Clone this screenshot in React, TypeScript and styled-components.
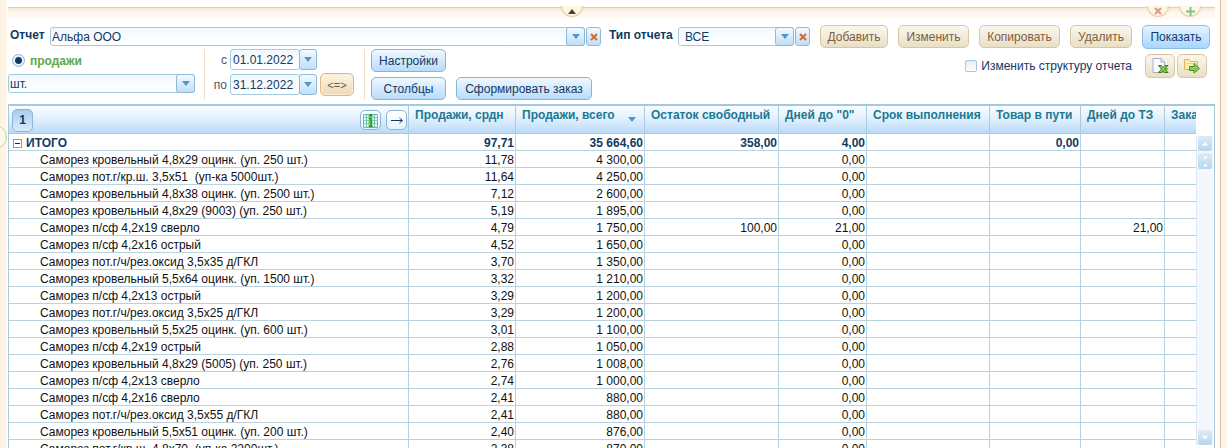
import React from "react";
import styled, { createGlobalStyle, css } from "styled-components";

const Global = createGlobalStyle`
  *, *::before, *::after { box-sizing: border-box; }
  html, body { margin: 0; height: 100%; }
  body { overflow: hidden; background: #fff; font: 12px/16px "Liberation Sans", Arial, sans-serif; color: #123a63; }
  button, input, select { font: inherit; color: inherit; margin: 0; }
  #root { height: 100%; }
`;

const Page = styled.div`
  display: grid;
  grid-template-columns: 7px minmax(0, 1fr) 7px;
  height: 100vh;
`;
const LeftRail = styled.div`
  position: relative;
  background: linear-gradient(90deg, #fdf3e3, #fff6ea);
`;
const RightRail = styled.div`
  background: #fdf3e8;
  border-left: 1px solid #dcbda0;
`;
const RailHandle = styled.button`
  position: absolute;
  top: 125px;
  right: 0;
  width: 24px;
  height: 24px;
  padding: 0;
  border: 1px solid #c5d6a0;
  border-radius: 50%;
  background: #fdf8e8;
`;
const Main = styled.main`
  display: flex;
  flex-direction: column;
  min-width: 0;
  height: 100vh;
  padding: 7px 5px 0 1px;
`;
const TopEdge = styled.div`
  position: relative;
  flex: none;
  height: 12px;
  border-top: 1px solid #edcba8;
  background: linear-gradient(#f9ead6 0 2px, #fdf5ec 3px, #fffaf6);
`;
const Tab = styled.button<{ $right?: string }>`
  position: absolute;
  top: -2px;
  ${(p) => (p.$right ? css`right: ${p.$right};` : css`left: calc(50% - 51px);`)}
  display: flex;
  align-items: center;
  justify-content: center;
  width: 22px;
  height: 11px;
  padding: 0;
  border: 1px solid #e6cfa6;
  border-top: 0;
  border-radius: 0 0 11px 11px;
  background: #fdf6e4;
`;

const Filters = styled.form`
  flex: none;
  display: flex;
  flex-direction: column;
  padding-top: 6px;
`;
const FilterLine = styled.div`
  display: flex;
  align-items: flex-start;
`;
const FieldLabel = styled.label<{ $w: number; $indent?: boolean }>`
  flex: none;
  width: ${(p) => p.$w}px;
  padding: 2px 0 0 ${(p) => (p.$indent ? 8 : 2)}px;
  font-weight: bold;
  white-space: nowrap;
`;
const Combo = styled.div<{ $w?: number }>`
  display: grid;
  grid-template-columns: minmax(0, 1fr) 19px;
  flex: ${(p) => (p.$w ? "none" : "1")};
  width: ${(p) => (p.$w ? p.$w + "px" : "auto")};
  height: 19px;
  margin-top: 2px;
`;
const Select = styled.select<{ $indent?: boolean }>`
  grid-area: 1 / 1 / 2 / 3;
  appearance: none;
  width: 100%;
  height: 19px;
  padding: 0 20px 0 ${(p) => (p.$indent ? 6 : 1)}px;
  border: 1px solid #a6cbe0;
  border-radius: 3px;
  background: linear-gradient(#f1f9fe, #fff);
`;
const arrowBox = css`
  display: flex;
  align-items: center;
  justify-content: center;
  padding: 0;
  border: 1px solid #8db9dc;
  border-radius: 3px;
  background: linear-gradient(#f4faff, #c0def8);
`;
const ComboArrow = styled.span`
  ${arrowBox}
  grid-area: 1 / 2;
  pointer-events: none;
`;
const DateArrow = styled.button`
  ${arrowBox}
  width: 18px;
  height: 21px;
  margin-left: -1px;
`;
const ClearButton = styled.button`
  ${arrowBox}
  flex: none;
  width: 15px;
  height: 19px;
  margin: 2px 0 0 1px;
`;
const tones = {
  blue: css`border-color: #8bb4d2; background: linear-gradient(#f0f8ff, #b8dcfa); color: #123a63;`,
  bright: css`border-color: #8cbde2; background: linear-gradient(#e4f4ff, #a9d6fd); color: #123a75;`,
  sand: css`border-color: #d8c6a2; background: linear-gradient(#fbf7ee, #e9dfc4); color: #7c6040;`,
};
const Button = styled.button<{ $w: number; $h?: number; $tone: keyof typeof tones }>`
  flex: none;
  display: inline-flex;
  align-items: center;
  justify-content: center;
  width: ${(p) => p.$w}px;
  height: ${(p) => p.$h ?? 23}px;
  padding: 0;
  border: 1px solid;
  border-radius: 5px;
  white-space: nowrap;
  ${(p) => tones[p.$tone]}
`;
const Actions = styled.div`
  flex: none;
  display: flex;
  gap: 10px;
  margin-left: 10px;
  padding-right: 5px;
`;
const Group = styled.div<{ $w?: number; $line?: boolean }>`
  flex: none;
  width: ${(p) => (p.$w ? p.$w + "px" : "auto")};
  height: 51px;
  border-right: ${(p) => (p.$line ? "1px solid #efdcc2" : "0")};
`;
const RadioLabel = styled.label`
  display: flex;
  align-items: center;
  gap: 5px;
  height: 23px;
  padding-left: 4px;
  color: #62a744;
  font-weight: bold;
`;
const Radio = styled.input`
  appearance: none;
  width: 13px;
  height: 13px;
  border: 1px solid #8fb4d4;
  border-radius: 50%;
  background: radial-gradient(circle, #143a60 0 3px, #e9f3fb 4px);
`;
const DateLine = styled.div`
  display: flex;
  align-items: center;
  height: 21px;
  margin-bottom: 4px;
`;
const DateLabel = styled.label`
  width: 25px;
  padding-right: 3px;
  text-align: right;
  color: #4c5563;
`;
const DateInput = styled.input`
  width: 70px;
  height: 21px;
  padding: 0 2px;
  border: 1px solid #a6cbe0;
  border-radius: 3px;
  background: linear-gradient(#f1f9fe, #fff);
`;
const SwapButton = styled.button`
  width: 34px;
  height: 23px;
  margin-left: 3px;
  padding: 0;
  border: 1px solid #dcb985;
  border-radius: 5px;
  background: linear-gradient(#fcf4e6, #ecd9b8);
  box-shadow: inset 0 0 0 1px #faebd2;
  color: #6b5a45;
  font-size: 11px;
`;
const ButtonGrid = styled.div`
  display: grid;
  grid-template-columns: 75px 136px;
  grid-auto-rows: 23px;
  gap: 5px 10px;
  margin-left: 6px;
  & > :first-child { grid-column: 1 / 3; }
`;
const Structure = styled.div`
  display: flex;
  align-items: flex-start;
  margin-left: auto;
  padding: 5px 8px 0 0;
`;
const CheckLabel = styled.label`
  display: flex;
  align-items: center;
  gap: 4px;
  height: 23px;
  margin-right: 13px;
`;
const Check = styled.input`
  appearance: none;
  width: 12px;
  height: 12px;
  border: 1px solid #a9c6dd;
  border-radius: 2px;
  background: linear-gradient(#e3eef7, #fff);
`;
const IconPair = styled.div`
  display: flex;
  gap: 2px;
`;

const Grid = styled.section`
  flex: 1;
  display: flex;
  min-height: 0;
  margin-top: 4px;
  border: solid #a5c8dc;
  border-width: 2px 1px 0 1px;
`;
const Viewport = styled.div`
  flex: 1;
  min-width: 0;
  overflow: hidden;
`;
const Table = styled.table`
  width: calc(100% + 60px);
  table-layout: fixed;
  border-collapse: separate;
  border-spacing: 0;
`;
const HeadCell = styled.th`
  height: 28px;
  padding: 1px 6px 0;
  border-right: 1px solid #a9cbe0;
  border-bottom: 1px solid #a9cbe0;
  background: linear-gradient(#fafdff, #e2f1fe 45%, #b9dbf8);
  color: #1c7893;
  text-align: left;
  vertical-align: top;
  white-space: nowrap;
`;
const Tools = styled.div`
  display: flex;
  align-items: center;
  gap: 5px;
  height: 26px;
  margin: 0 -5px 0 -3px;
`;
const ToolButton = styled.button<{ $level?: boolean }>`
  display: flex;
  align-items: center;
  justify-content: center;
  width: 21px;
  height: ${(p) => (p.$level ? 23 : 20)}px;
  margin-right: ${(p) => (p.$level ? "auto" : "0")};
  padding: 0;
  border: 1px solid #8db4d0;
  border-radius: 5px;
  background: ${(p) => (p.$level ? "linear-gradient(#a9cdee, #d9ebfb)" : "linear-gradient(#fff, #e6f3fe)")};
  color: #123a63;
  font-weight: bold;
`;
const SortHead = styled.div`
  display: flex;
  justify-content: space-between;
  padding-right: 2px;
  svg { margin-top: 10px; }
`;
const NameCell = styled.td<{ $total?: boolean }>`
  height: 17px;
  padding: 2px 0 0 ${(p) => (p.$total ? 4 : 31)}px;
  border-right: 1px solid #b9d2e0;
  border-bottom: 1px solid #b9d2e0;
  color: ${(p) => (p.$total ? "#123a63" : "#111")};
  font-weight: ${(p) => (p.$total ? "bold" : "normal")};
  line-height: 14px;
  white-space: pre;
`;
const NumCell = styled(NameCell)`
  padding: 2px 1px 0 0;
  text-align: right;
`;
const TotalName = styled.span`
  display: flex;
  align-items: center;
  gap: 4px;
`;
const Toggle = styled.button`
  display: flex;
  align-items: center;
  justify-content: center;
  width: 9px;
  height: 9px;
  padding: 0;
  border: 1px solid #999;
  background: #fff;
`;
const Scroll = styled.div`
  flex: none;
  display: flex;
  flex-direction: column;
  width: 17px;
  margin: 30px 1px 3px 0;
  padding: 0 1px;
  border-left: 1px solid #dce8f2;
  background: #f4f8fd;
`;
const ScrollButton = styled.button`
  display: flex;
  align-items: center;
  justify-content: center;
  height: 15px;
  padding: 0;
  border: 0;
  border-radius: 2px;
  background: linear-gradient(#dcecf9, #b9d5ee);
`;
const Thumb = styled(ScrollButton)`
  height: 16px;
  margin: 2px 0 auto;
`;

const Triangle = ({ color = "#5596c4", up = false, w = 8 }) => (
  <svg width={w} height="5" viewBox="0 0 8 5" aria-hidden="true">
    <path d={up ? "M0 5 4 0 8 5Z" : "M0 0H8L4 5Z"} fill={color} />
  </svg>
);
const Cross = ({ color = "#d9692b" }) => (
  <svg width="8" height="8" viewBox="0 0 8 8" aria-hidden="true">
    <path d="M1 1 7 7M7 1 1 7" stroke={color} strokeWidth="2" />
  </svg>
);
const ExcelIcon = () => (
  <svg width="18" height="18" viewBox="0 0 18 18" aria-hidden="true">
    <path d="M2 1.5H10L13.5 5V15.5H2Z" fill="#f8fbff" stroke="#a3aecb" />
    <path d="M10 1.5V5H13.5" fill="#dfe6f4" stroke="#a3aecb" />
    <path d="M7.5 8.5H10.5L12 10.5 14 8.5H17L13.7 12 17 15.5H13.5L12 13.5 10.5 15.5H7.5L10.5 12Z" fill="#8fcf52" stroke="#36791f" />
    <path d="M14 12H17" stroke="#36791f" />
  </svg>
);
const ExportIcon = () => (
  <svg width="18" height="18" viewBox="0 0 18 18" aria-hidden="true">
    <path d="M1.5 2.5H6L7.5 4.5H14.5V12.5H1.5Z" fill="#fdeeb0" stroke="#d9b75a" />
    <path d="M3.5 6.5H14.5" stroke="#ecd08a" />
    <path d="M6.5 9.5H11V6.5L16.5 11.5 11 16V13.5H6.5Z" fill="#8ccb55" stroke="#4d8d2c" />
  </svg>
);
const ColumnsIcon = () => (
  <svg width="15" height="15" viewBox="0 0 15 15" aria-hidden="true">
    <path d="M.5 1.5H14.5V14.5H.5Z" fill="#e8f6fb" stroke="#5fb6cf" />
    <path d="M1 4.5H14M1 7.5H14M1 10.5H14" stroke="#8ccadc" />
    <path d="M3.5 2V14M11.5 2V14" stroke="#6cc4b0" />
    <path d="M5.5 1H9.5V14.5H5.5Z" fill="#5fd35f" />
    <path d="M6 5.5H8V13M6 13.5H9.5M7 1.5H8.5V3H7Z" fill="none" stroke="#1c7d2c" />
  </svg>
);
const ArrowIcon = () => (
  <svg width="14" height="9" viewBox="0 0 14 9" aria-hidden="true">
    <path d="M1 4.5H12M9.5 2 12.5 4.5 9.5 7" fill="none" stroke="#123a63" />
  </svg>
);

type Row = [name: string, avg: string, sum: string, free?: string, days?: string, tz?: string];
const rows: Row[] = [
  ["Саморез кровельный 4,8х29 оцинк. (уп. 250 шт.)", "11,78", "4 300,00"],
  ["Саморез пот.г/кр.ш. 3,5х51  (уп-ка 5000шт.)", "11,64", "4 250,00"],
  ["Саморез кровельный 4,8х38 оцинк. (уп. 2500 шт.)", "7,12", "2 600,00"],
  ["Саморез кровельный 4,8х29 (9003) (уп. 250 шт.)", "5,19", "1 895,00"],
  ["Саморез п/сф 4,2х19 сверло", "4,79", "1 750,00", "100,00", "21,00", "21,00"],
  ["Саморез п/сф 4,2х16 острый", "4,52", "1 650,00"],
  ["Саморез пот.г/ч/рез.оксид 3,5х35 д/ГКЛ", "3,70", "1 350,00"],
  ["Саморез кровельный 5,5х64 оцинк. (уп. 1500 шт.)", "3,32", "1 210,00"],
  ["Саморез п/сф 4,2х13 острый", "3,29", "1 200,00"],
  ["Саморез пот.г/ч/рез.оксид 3,5х25 д/ГКЛ", "3,29", "1 200,00"],
  ["Саморез кровельный 5,5х25 оцинк. (уп. 600 шт.)", "3,01", "1 100,00"],
  ["Саморез п/сф 4,2х19 острый", "2,88", "1 050,00"],
  ["Саморез кровельный 4,8х29 (5005) (уп. 250 шт.)", "2,76", "1 008,00"],
  ["Саморез п/сф 4,2х13 сверло", "2,74", "1 000,00"],
  ["Саморез п/сф 4,2х16 сверло", "2,41", "880,00"],
  ["Саморез пот.г/ч/рез.оксид 3,5х55 д/ГКЛ", "2,41", "880,00"],
  ["Саморез кровельный 5,5х51 оцинк. (уп. 200 шт.)", "2,40", "876,00"],
  ["Саморез пот.г/кр.ш. 4,8х70  (уп-ка 2200шт.)", "2,38", "870,00"],
];
const widths = [undefined, 107, 129, 134, 88, 123, 91, 84, 91];

export default function App() {
  return (
    <Page>
      <Global />
      <LeftRail><RailHandle aria-label="Показать панель" /></LeftRail>
      <Main>
        <TopEdge>
          <Tab aria-label="Свернуть"><Triangle up color="#3d4a1c" /></Tab>
          <Tab $right="46px" aria-label="Закрыть"><Cross color="#e09a7c" /></Tab>
          <Tab $right="14px" aria-label="Добавить вкладку">
            <svg width="9" height="9" viewBox="0 0 9 9"><path d="M4.5 0V9M0 4.5H9" stroke="#7cc48c" strokeWidth="2" /></svg>
          </Tab>
        </TopEdge>
        <Filters onSubmit={(e) => e.preventDefault()}>
          <FilterLine>
            <FieldLabel $w={42} htmlFor="report">Отчет</FieldLabel>
            <Combo>
              <Select id="report"><option>Альфа ООО</option></Select>
              <ComboArrow><Triangle /></ComboArrow>
            </Combo>
            <ClearButton type="button" aria-label="Очистить отчет"><Cross /></ClearButton>
            <FieldLabel $w={77} $indent htmlFor="kind">Тип отчета</FieldLabel>
            <Combo $w={116}>
              <Select id="kind" $indent><option>ВСЕ</option></Select>
              <ComboArrow><Triangle /></ComboArrow>
            </Combo>
            <ClearButton type="button" aria-label="Очистить тип"><Cross /></ClearButton>
            <Actions>
              <Button type="button" $w={68} $tone="sand">Добавить</Button>
              <Button type="button" $w={71} $tone="sand">Изменить</Button>
              <Button type="button" $w={81} $tone="sand">Копировать</Button>
              <Button type="button" $w={62} $tone="sand">Удалить</Button>
              <Button type="submit" $w={68} $h={24} $tone="bright">Показать</Button>
            </Actions>
          </FilterLine>
          <FilterLine>
            <Group $w={197} $line>
              <RadioLabel><Radio type="radio" name="source" defaultChecked />продажи</RadioLabel>
              <Combo $w={187}>
                <Select aria-label="Единица"><option>шт.</option></Select>
                <ComboArrow><Triangle /></ComboArrow>
              </Combo>
            </Group>
            <Group $w={160} $line>
              <DateLine>
                <DateLabel htmlFor="from">с</DateLabel>
                <DateInput id="from" defaultValue="01.01.2022" />
                <DateArrow type="button" aria-label="Выбрать начало"><Triangle /></DateArrow>
              </DateLine>
              <DateLine>
                <DateLabel htmlFor="to">по</DateLabel>
                <DateInput id="to" defaultValue="31.12.2022" />
                <DateArrow type="button" aria-label="Выбрать конец"><Triangle /></DateArrow>
                <SwapButton type="button">&lt;=&gt;</SwapButton>
              </DateLine>
            </Group>
            <ButtonGrid>
              <Button type="button" $w={75} $tone="blue">Настройки</Button>
              <Button type="button" $w={75} $tone="blue">Столбцы</Button>
              <Button type="button" $w={136} $tone="blue">Сформировать заказ</Button>
            </ButtonGrid>
            <Structure>
              <CheckLabel><Check type="checkbox" />Изменить структуру отчета</CheckLabel>
              <IconPair>
                <Button type="button" $w={30} $h={24} $tone="sand" aria-label="Выгрузить в Excel"><ExcelIcon /></Button>
                <Button type="button" $w={30} $h={24} $tone="sand" aria-label="Экспорт"><ExportIcon /></Button>
              </IconPair>
            </Structure>
          </FilterLine>
        </Filters>
        <Grid>
          <Viewport>
            <Table>
              <colgroup>{widths.map((w, i) => <col key={i} width={w} />)}</colgroup>
              <thead>
                <tr>
                  <HeadCell>
                    <Tools>
                      <ToolButton $level>1</ToolButton>
                      <ToolButton aria-label="Столбцы"><ColumnsIcon /></ToolButton>
                      <ToolButton aria-label="Вправо"><ArrowIcon /></ToolButton>
                    </Tools>
                  </HeadCell>
                  <HeadCell>Продажи, срдн</HeadCell>
                  <HeadCell><SortHead>Продажи, всего<Triangle /></SortHead></HeadCell>
                  <HeadCell>Остаток свободный</HeadCell>
                  <HeadCell>Дней до "0"</HeadCell>
                  <HeadCell>Срок выполнения</HeadCell>
                  <HeadCell>Товар в пути</HeadCell>
                  <HeadCell>Дней до ТЗ</HeadCell>
                  <HeadCell>Заказать</HeadCell>
                </tr>
              </thead>
              <tbody>
                <tr>
                  <NameCell $total>
                    <TotalName>
                      <Toggle aria-label="Свернуть итого"><svg width="5" height="1"><path d="M0 .5H5" stroke="#222" /></svg></Toggle>
                      ИТОГО
                    </TotalName>
                  </NameCell>
                  {["97,71", "35 664,60", "358,00", "4,00", "", "0,00", "", ""].map((v, i) => <NumCell $total key={i}>{v}</NumCell>)}
                </tr>
                {rows.map(([name, avg, sum, free = "", days = "0,00", tz = ""]) => (
                  <tr key={name}>
                    <NameCell>{name}</NameCell>
                    {[avg, sum, free, days, "", "", tz, ""].map((v, i) => <NumCell key={i}>{v}</NumCell>)}
                  </tr>
                ))}
              </tbody>
            </Table>
          </Viewport>
          <Scroll>
            <ScrollButton aria-label="Вверх"><Triangle up color="#fff" w={6} /></ScrollButton>
            <Thumb aria-label="Ползунок">
              <svg width="3" height="11"><path d="M0 1.5H3M0 9.5H3" stroke="#fff" strokeWidth="2" /></svg>
            </Thumb>
            <ScrollButton aria-label="Вниз"><Triangle color="#fff" w={6} /></ScrollButton>
          </Scroll>
        </Grid>
      </Main>
      <RightRail />
    </Page>
  );
}
